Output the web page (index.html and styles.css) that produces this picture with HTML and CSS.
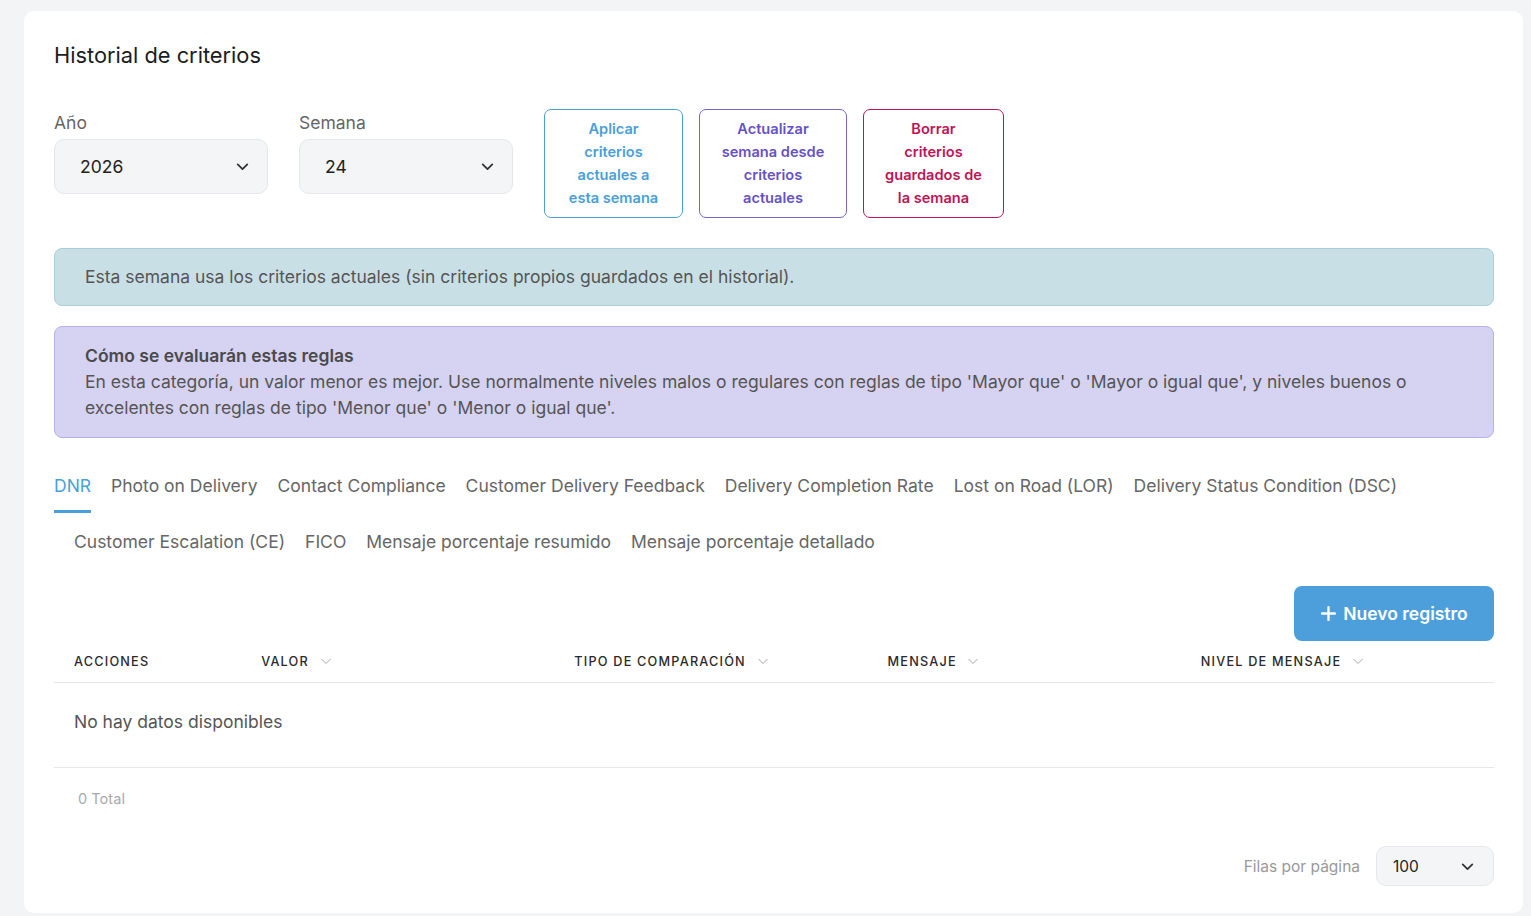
FILE: index.html
```html
<!DOCTYPE html>
<html lang="es">
<head>
    <meta charset="UTF-8">
    <meta name="viewport" content="width=device-width, initial-scale=1.0">
    <title>Historial de criterios</title>
    <link rel="stylesheet" href="styles.css">
</head>
<body>

    <div class="card">
        <h2 class="card-title">Historial de criterios</h2>

        <!-- Filtros y acciones -->
        <div class="filters">
            <div class="field">
                <label>Año</label>
                <div class="select">
                    <span>2026</span>
                    <svg class="chev" viewBox="0 0 16 16"><path d="M3.5 6l4.5 4.5L12.5 6"/></svg>
                </div>
            </div>
            <div class="field">
                <label>Semana</label>
                <div class="select">
                    <span>24</span>
                    <svg class="chev" viewBox="0 0 16 16"><path d="M3.5 6l4.5 4.5L12.5 6"/></svg>
                </div>
            </div>
            <div class="actions">
                <button class="btn-outline blue">Aplicar criterios actuales a esta semana</button>
                <button class="btn-outline purple">Actualizar semana desde criterios actuales</button>
                <button class="btn-outline red">Borrar criterios guardados de la semana</button>
            </div>
        </div>

        <div class="alert info">Esta semana usa los criterios actuales (sin criterios propios guardados en el historial).</div>

        <div class="alert rules">
            <strong>Cómo se evaluarán estas reglas</strong>
            <p>En esta categoría, un valor menor es mejor. Use normalmente niveles malos o regulares con reglas de tipo 'Mayor que' o 'Mayor o igual que', y niveles buenos o excelentes con reglas de tipo 'Menor que' o 'Menor o igual que'.</p>
        </div>

        <!-- Tabs -->
        <div class="tabs">
            <div class="tab-row">
                <span class="tab active">DNR</span>
                <span class="tab">Photo on Delivery</span>
                <span class="tab">Contact Compliance</span>
                <span class="tab">Customer Delivery Feedback</span>
                <span class="tab">Delivery Completion Rate</span>
                <span class="tab">Lost on Road (LOR)</span>
                <span class="tab">Delivery Status Condition (DSC)</span>
            </div>
            <div class="tab-row second">
                <span class="tab">Customer Escalation (CE)</span>
                <span class="tab">FICO</span>
                <span class="tab">Mensaje porcentaje resumido</span>
                <span class="tab">Mensaje porcentaje detallado</span>
            </div>
        </div>

        <div class="toolbar">
            <button class="btn-primary">
                <svg viewBox="0 0 16 16"><path d="M8 2v12M2 8h12"/></svg>
                Nuevo registro
            </button>
        </div>

        <!-- Tabla -->
        <table class="table">
            <thead>
                <tr>
                    <th class="col-actions">Acciones</th>
                    <th>Valor <svg class="sort" viewBox="0 0 12 12"><path d="M1.5 4l4.5 4.5L10.5 4"/></svg></th>
                    <th>Tipo de comparación <svg class="sort" viewBox="0 0 12 12"><path d="M1.5 4l4.5 4.5L10.5 4"/></svg></th>
                    <th>Mensaje <svg class="sort" viewBox="0 0 12 12"><path d="M1.5 4l4.5 4.5L10.5 4"/></svg></th>
                    <th>Nivel de mensaje <svg class="sort" viewBox="0 0 12 12"><path d="M1.5 4l4.5 4.5L10.5 4"/></svg></th>
                </tr>
            </thead>
            <tbody>
                <tr>
                    <td colspan="5" class="empty">No hay datos disponibles</td>
                </tr>
            </tbody>
        </table>

        <div class="total">0 Total</div>

        <div class="pager">
            <span>Filas por página</span>
            <div class="select small">
                <span>100</span>
                <svg class="chev" viewBox="0 0 16 16"><path d="M3.5 6l4.5 4.5L12.5 6"/></svg>
            </div>
        </div>
    </div>

</body>
</html>
```

FILE: styles.css
```css
/* CSS */
body {
    font-family: Inter, "Noto Sans", sans-serif;
    background-color: #f3f4f6;
    color: #222;
    margin: 0;
    padding: 11px 8px 0 24px;
}

.card {
    background-color: #fff;
    border-radius: 10px;
    padding: 29px 29px 24px 30px;
    height: 849px;
}

.card-title {
    margin: 0;
    font-size: 21.8px;
    font-weight: 400;
    color: #1c1c1c;
    line-height: 30px;
}

.filters {
    display: flex;
    align-items: flex-start;
    margin-top: 39px;
}

.field {
    width: 214px;
    margin-right: 31px;
}

.field label {
    display: block;
    font-size: 17.5px;
    color: #666;
    line-height: 24px;
    margin-top: 2px;
    margin-bottom: 4px;
}

.select {
    box-sizing: border-box;
    height: 55px;
    background-color: #f4f5f7;
    border: 1px solid #e6e7ea;
    border-radius: 10px;
    display: flex;
    align-items: center;
    justify-content: space-between;
    padding: 0 16px 0 25px;
    font-size: 17.5px;
    color: #222;
}

.chev {
    width: 17px;
    height: 17px;
    fill: none;
    stroke: #333;
    stroke-width: 1.7;
    stroke-linecap: round;
    stroke-linejoin: round;
}

.actions {
    display: flex;
    gap: 16px;
}

.btn-outline {
    box-sizing: border-box;
    height: 109px;
    background: #fff;
    border: 1px solid;
    border-radius: 7px;
    font-family: inherit;
    font-size: 14.6px;
    font-weight: 600;
    line-height: 23px;
    text-align: center;
    padding: 0 17px;
    cursor: pointer;
}

.btn-outline.blue {
    width: 139px;
    color: #4a9fd8;
    border-color: #4a9fd8;
}

.btn-outline.purple {
    width: 148px;
    color: #6652c4;
    border-color: #7765c9;
}

.btn-outline.red {
    width: 141px;
    color: #bd1556;
    border-color: #bd1556;
    padding: 0 18px;
}

.alert {
    border-radius: 8px;
    border: 1px solid;
    padding: 0 30px;
    font-size: 17.5px;
    color: #555;
}

.alert.info {
    margin-top: 30px;
    height: 56px;
    line-height: 56px;
    background-color: #c9dfe6;
    border-color: #a8cfda;
}

.alert.rules {
    margin-top: 20px;
    background-color: #d6d2f1;
    border-color: #b9b0e8;
    padding-top: 16px;
    padding-bottom: 16px;
    line-height: 26px;
}

.alert.rules strong {
    font-weight: 600;
    color: #4a4a4a;
}

.alert.rules p {
    margin: 0;
}

.tabs {
    margin-top: 35px;
}

.tab-row {
    display: flex;
    gap: 20px;
    font-size: 17.5px;
    color: #666;
}

.tab-row.second {
    padding-left: 20px;
    margin-top: 16px;
}

.tab {
    line-height: 26px;
    padding-bottom: 14px;
}

.tab.active {
    color: #4a9fd8;
    border-bottom: 3px solid #4a9fd8;
    padding-bottom: 11px;
}

.toolbar {
    display: flex;
    justify-content: flex-end;
    margin-top: 17px;
}

.btn-primary {
    width: 200px;
    height: 55px;
    border: none;
    border-radius: 8px;
    background-color: #4c9fdb;
    color: #fff;
    font-family: inherit;
    font-size: 17.5px;
    font-weight: 600;
    display: flex;
    align-items: center;
    justify-content: center;
    gap: 6px;
    cursor: pointer;
}

.btn-primary svg {
    width: 17px;
    height: 17px;
    fill: none;
    stroke: #fff;
    stroke-width: 2.2;
    stroke-linecap: round;
}

.table {
    width: 100%;
    border-collapse: collapse;
    margin-top: 1px;
}

.table th {
    text-align: left;
    font-size: 12.7px;
    font-weight: 500;
    text-transform: uppercase;
    letter-spacing: 1.2px;
    color: #2a2a2a;
    padding: 12px 20px 13px;
    border-bottom: 1px solid #e6e7ea;
    width: 273px;
}

.table th.col-actions {
    width: 147px;
}

.sort {
    width: 12px;
    height: 12px;
    fill: none;
    stroke: #a5a5a5;
    stroke-width: 1;
    margin-left: 6px;
    vertical-align: -1px;
}

.empty {
    font-size: 17.5px;
    line-height: 22px;
    color: #555;
    padding: 28px 20px 34px;
    vertical-align: top;
    border-bottom: 1px solid #e6e7ea;
}

.total {
    font-size: 14.6px;
    color: #aaa;
    padding-left: 24px;
    margin-top: 22px;
}

.pager {
    display: flex;
    justify-content: flex-end;
    align-items: center;
    gap: 16px;
    margin-top: 38px;
    font-size: 15.5px;
    color: #999;
}

.select.small {
    width: 118px;
    height: 40px;
    font-size: 15.5px;
    padding: 0 17px 0 16px;
}
```
